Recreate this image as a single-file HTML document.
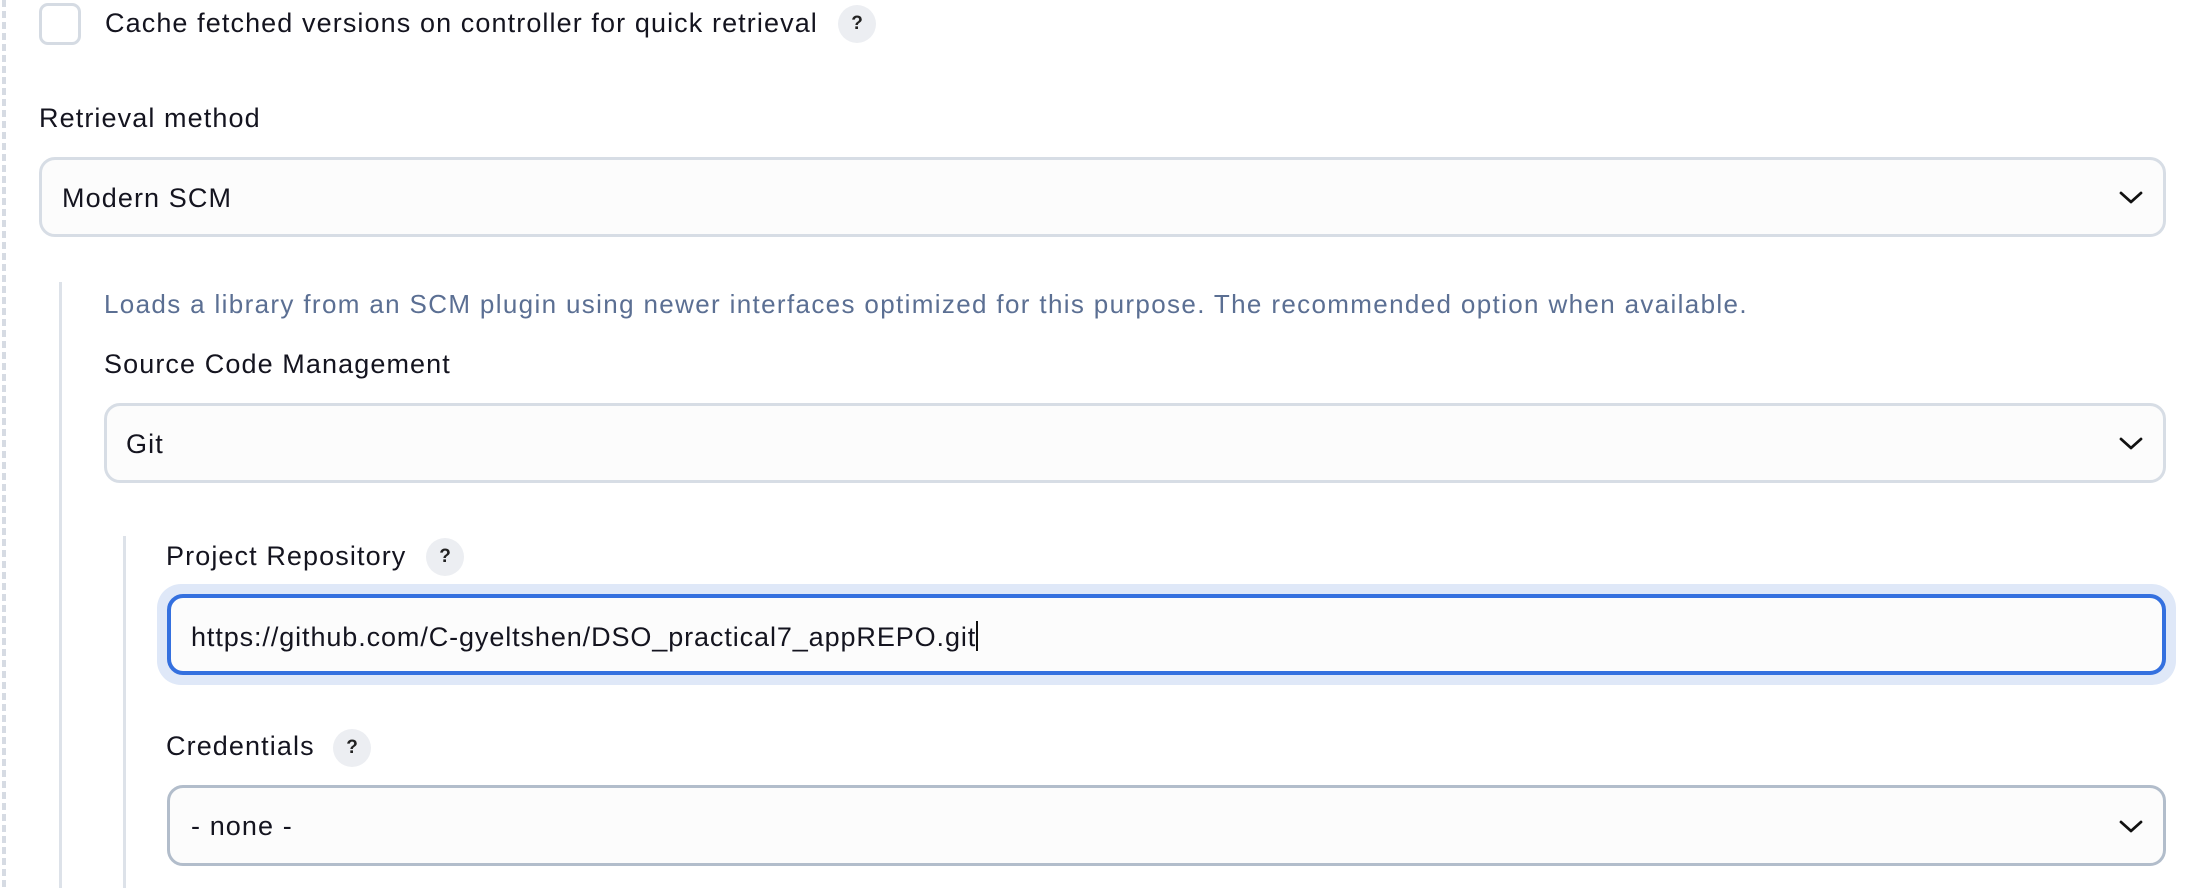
<!DOCTYPE html>
<html><head><meta charset="utf-8"><style>
html,body{margin:0;padding:0;width:2196px;height:888px;background:#fff;overflow:hidden;font-family:"Liberation Sans",sans-serif;color:#14141f}
.a{position:absolute}
.dash{left:2px;top:0;width:4px;height:888px;background:repeating-linear-gradient(to bottom,#d6dbe3 0 7px,transparent 7px 11px)}
.cb{left:39px;top:3px;width:36px;height:36px;border:3px solid #d5dbe3;border-radius:9px;background:#fff}
.t{font-size:27px;letter-spacing:1.1px;white-space:nowrap;line-height:1}
.q{width:38px;height:38px;border-radius:50%;background:#eceef2;font-size:19px;font-weight:bold;text-align:center;line-height:38px;color:#222}
.sel{box-sizing:border-box;border:3px solid #d7dde5;border-radius:16px;background:#fcfcfc}
.chev{position:absolute;right:20px;top:50%;margin-top:-6px}
.vl{width:3px;background:#dde2e9}
</style></head><body>
<div class="a dash"></div>
<div class="a cb"></div>
<div class="a t" style="left:105px;top:10px">Cache fetched versions on controller for quick retrieval</div>
<div class="a q" style="left:838px;top:5px">?</div>
<div class="a t" style="left:39px;top:105px">Retrieval method</div>
<div class="a sel" style="left:39px;top:157px;width:2127px;height:80px"><div class="a t" style="left:20px;top:25px">Modern SCM</div>
<svg class="chev" width="24" height="13" viewBox="0 0 24 13"><path d="M2 2 L12 11 L22 2" fill="none" stroke="#111" stroke-width="2.8" stroke-linecap="round" stroke-linejoin="round"/></svg></div>
<div class="a vl" style="left:59px;top:282px;height:606px"></div>
<div class="a t" style="left:104px;top:291px;color:#5b6f93;font-size:26px;letter-spacing:1.35px">Loads a library from an SCM plugin using newer interfaces optimized for this purpose. The recommended option when available.</div>
<div class="a t" style="left:104px;top:351px">Source Code Management</div>
<div class="a sel" style="left:104px;top:403px;width:2062px;height:80px"><div class="a t" style="left:19px;top:25px">Git</div>
<svg class="chev" width="24" height="13" viewBox="0 0 24 13"><path d="M2 2 L12 11 L22 2" fill="none" stroke="#111" stroke-width="2.8" stroke-linecap="round" stroke-linejoin="round"/></svg></div>
<div class="a vl" style="left:123px;top:536px;height:352px"></div>
<div class="a t" style="left:166px;top:543px">Project Repository</div>
<div class="a q" style="left:426px;top:538px">?</div>
<div class="a" style="left:157px;top:584px;width:2019px;height:101px;border-radius:24px;background:#dfe8f8"></div>
<div class="a sel" style="left:167px;top:594px;width:1999px;height:81px;border:4px solid #3470df;background:#fcfcfc"><div class="a t" style="left:20px;top:23px;letter-spacing:0.9px">https://github.com/C-gyeltshen/DSO_practical7_appREPO.git<span style="display:inline-block;width:2px;height:30px;background:#111;vertical-align:-5px"></span></div></div>
<div class="a t" style="left:166px;top:733px">Credentials</div>
<div class="a q" style="left:333px;top:729px">?</div>
<div class="a sel" style="left:167px;top:785px;width:1999px;height:81px;border-color:#b2bdcb"><div class="a t" style="left:21px;top:25px">- none -</div>
<svg class="chev" width="24" height="13" viewBox="0 0 24 13"><path d="M2 2 L12 11 L22 2" fill="none" stroke="#111" stroke-width="2.8" stroke-linecap="round" stroke-linejoin="round"/></svg></div>
</body></html>
